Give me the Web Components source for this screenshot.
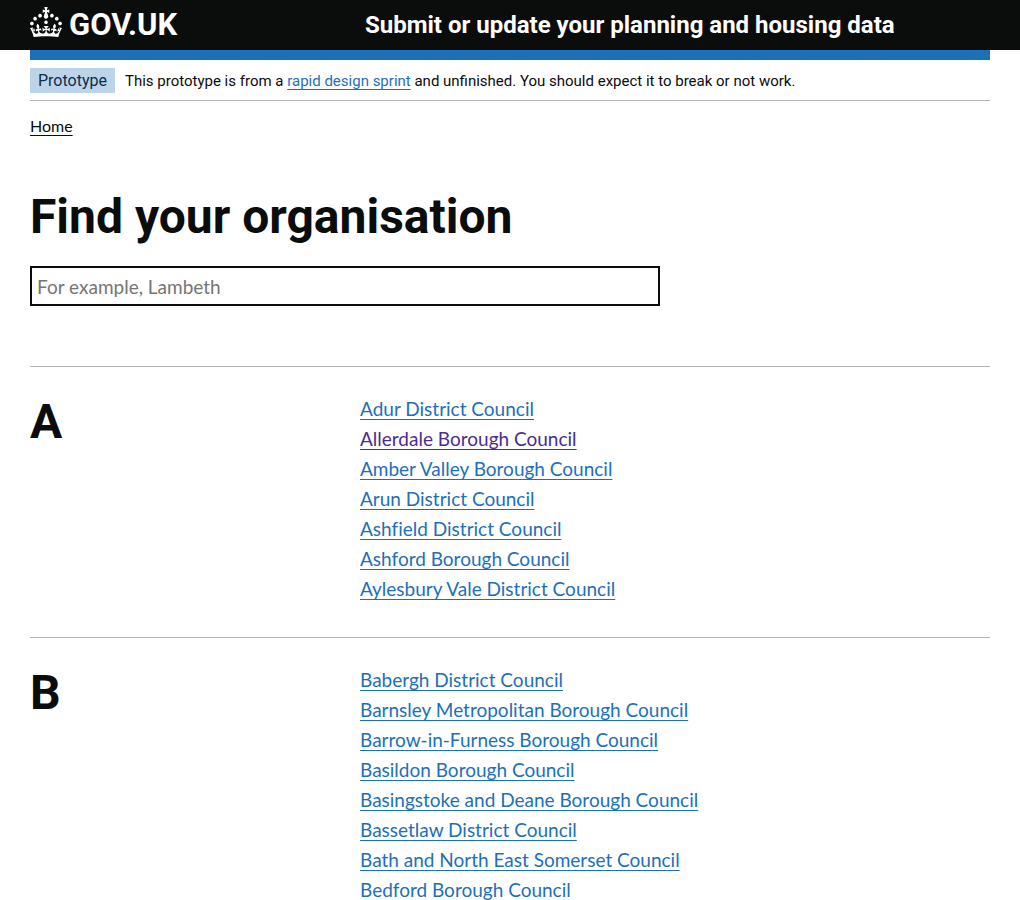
<!DOCTYPE html>
<html lang="en">
<head>
<meta charset="utf-8">
<meta name="viewport" content="width=device-width, initial-scale=1">
<title>Find your organisation</title>
<style>
  body { margin: 0; background: #fff; color: #0b0c0c; font-family: Lato, Roboto, sans-serif; font-variant-ligatures: none; }
  main { display: block; padding: 0 30px; }
</style>
</head>
<body>
<site-header>Submit or update your planning and housing data</site-header>
<main>
  <phase-banner tag="Prototype">This prototype is from a <text-link>rapid design sprint</text-link> and unfinished. You should expect it to break or not work.</phase-banner>
  <bread-crumbs>Home</bread-crumbs>
  <organisation-search placeholder="For example, Lambeth">Find your organisation</organisation-search>
  <organisation-group letter="A">
    <text-link>Adur District Council</text-link>
    <text-link visited>Allerdale Borough Council</text-link>
    <text-link>Amber Valley Borough Council</text-link>
    <text-link>Arun District Council</text-link>
    <text-link>Ashfield District Council</text-link>
    <text-link>Ashford Borough Council</text-link>
    <text-link>Aylesbury Vale District Council</text-link>
  </organisation-group>
  <organisation-group letter="B">
    <text-link>Babergh District Council</text-link>
    <text-link>Barnsley Metropolitan Borough Council</text-link>
    <text-link>Barrow-in-Furness Borough Council</text-link>
    <text-link>Basildon Borough Council</text-link>
    <text-link>Basingstoke and Deane Borough Council</text-link>
    <text-link>Bassetlaw District Council</text-link>
    <text-link>Bath and North East Somerset Council</text-link>
    <text-link>Bedford Borough Council</text-link>
  </organisation-group>
</main>

<script>
class BaseElement extends HTMLElement {
  connectedCallback() {
    if (this.shadowRoot) return;
    this.attachShadow({ mode: 'open' }).innerHTML = this.render();
  }
}

customElements.define('site-header', class extends BaseElement {
  render() {
    return `
      <style>
        :host { display: block; background: #0b0c0c; color: #fff; font-family: Roboto, sans-serif; }
        header { padding: 0 30px; }
        .row { display: grid; grid-template-columns: 1fr 2fr; align-items: center; }
        .logo { display: flex; align-items: center; gap: 7px; color: #fff; text-decoration: none; font-size: 31px; line-height: 50px; font-weight: 700; }
        svg { display: block; fill: currentColor; margin-bottom: 6px; }
        .service { padding-left: 15px; font-size: 24px; line-height: 50px; font-weight: 700; color: #fff; text-decoration: none; }
        .bar { height: 10px; background: #1d70b8; margin: 0 30px; }
        .below { background: #fff; }
      </style>
      <header>
        <div class="row">
          <a class="logo" href="#">
            <svg width="32" height="30" viewBox="0 0 32 30" aria-hidden="true"><path d="M22.6 10.4c-1 .4-2-.1-2.4-1-.4-.9.1-2 1-2.4.9-.4 2 .1 2.4 1s-.1 2-1 2.4m-5.9 6.7c-.9.4-2-.1-2.4-1-.4-.9.1-2 1-2.4.9-.4 2 .1 2.4 1s-.1 2-1 2.4m10.8-3.7c-1 .4-2-.1-2.4-1-.4-.9.1-2 1-2.4.9-.4 2 .1 2.4 1s0 2-1 2.4m3.3 4.8c-1 .4-2-.1-2.4-1-.4-.9.1-2 1-2.4.9-.4 2 .1 2.4 1s-.1 2-1 2.4M17 4.7l2.3 1.2V2.5l-2.3.7-.2-.2.9-3h-3.4l.9 3-.2.2c-.1.1-2.3-.7-2.3-.7v3.4L15 4.7c.1.1.1.2.2.2l-1.3 4c-.1.2-.1.4-.1.6 0 1.1.8 2 1.9 2.2h.7c1-.2 1.9-1.1 1.9-2.1 0-.2 0-.4-.1-.6l-1.3-4c-.1-.2 0-.2.1-.3m-7.6 5.7c.9.4 2-.1 2.4-1 .4-.9-.1-2-1-2.4-.9-.4-2 .1-2.4 1s0 2 1 2.4m-5 3c.9.4 2-.1 2.4-1 .4-.9-.1-2-1-2.4-.9-.4-2 .1-2.4 1s.1 2 1 2.4m-3.2 4.8c.9.4 2-.1 2.4-1 .4-.9-.1-2-1-2.4-.9-.4-2 .1-2.4 1s0 2 1 2.4m14.8 11c4.4 0 8.6.3 12.3.8 1.1-4.5 2.4-7 3.7-8.8l-2.5-.9c.2 1.3.3 1.9 0 2.7-.4-.4-.8-1.1-1.1-2.3l-1.2 4c.7-.5 1.3-.8 2-.9-1.1 2.5-2.6 3.1-3.5 3-1.1-.2-1.7-1.2-1.5-2.1.3-1.2 1.5-1.5 2.1-.1 1.1-2.3-.8-3-2-2.3 1.9-1.9 2.1-3.5.6-5.6-2.1 1.6-2.1 3.2-1.2 5.5-1.2-1.4-3.2-.6-2.5 1.6.9-1.4 2.1-.5 1.9.8-.2 1.1-1.7 2.1-3.5 1.9-2.7-.2-2.9-2.1-2.9-3.6.7-.1 1.9.5 2.9 1.9l.4-4.3c-1.1 1.1-2.1 1.4-3.2 1.4.4-1.2 2.1-3 2.1-3h-5.4s1.7 1.9 2.1 3c-1.1 0-2.1-.2-3.2-1.4l.4 4.3c1-1.4 2.2-2 2.9-1.9-.1 1.5-.2 3.4-2.9 3.6-1.9.2-3.4-.8-3.5-1.9-.2-1.3 1-2.2 1.9-.8.7-2.3-1.2-3-2.5-1.6.9-2.2.9-3.9-1.2-5.5-1.5 2-1.3 3.7.6 5.6-1.2-.7-3.1 0-2 2.3.6-1.4 1.8-1.1 2.1.1.2.9-.3 1.9-1.5 2.1-.9.2-2.4-.5-3.5-3 .6 0 1.2.3 2 .9l-1.2-4c-.3 1.1-.7 1.9-1.1 2.3-.3-.8-.2-1.4 0-2.7l-2.9.9C1.3 23 2.6 25.5 3.7 30c3.7-.5 7.9-.8 12.3-.8"/></svg>
            <span>GOV.UK</span>
          </a>
          <a class="service" href="#"><slot></slot></a>
        </div>
      </header>
      <div class="below"><div class="bar"></div></div>`;
  }
});

customElements.define('phase-banner', class extends BaseElement {
  render() {
    return `
      <style>
        :host { display: block; border-bottom: 1px solid #b1b4b6; padding: 8px 0 6px; }
        p { display: flex; align-items: baseline; gap: 10px; margin: 0; font: 400 15px/25px Roboto, sans-serif; }
        strong { padding: 0 8px; background: #bbd4ea; color: #0c2d4a; font: 400 16px/25px Roboto, sans-serif; }
      </style>
      <p><strong>${this.getAttribute('tag')}</strong><span><slot></slot></span></p>`;
  }
});

customElements.define('text-link', class extends BaseElement {
  render() {
    const colour = this.hasAttribute('visited') ? '#4c2c92' : '#1d70b8';
    return `
      <style>
        :host { display: inline; }
        a { color: ${colour}; text-decoration: underline; text-decoration-thickness: 1px; text-underline-offset: 3px; }
      </style>
      <a href="#"><slot></slot></a>`;
  }
});

customElements.define('bread-crumbs', class extends BaseElement {
  render() {
    return `
      <style>
        :host { display: block; padding-top: 15px; font-size: 16px; line-height: 20px; }
        a { color: #0b0c0c; text-decoration: underline; text-decoration-thickness: 1px; text-underline-offset: 3px; }
      </style>
      <nav aria-label="Breadcrumb"><a href="#"><slot></slot></a></nav>`;
  }
});

customElements.define('organisation-search', class extends BaseElement {
  render() {
    return `
      <style>
        :host { display: block; padding: 55px 0 60px; }
        h1 { margin: 0 0 23px; font: 700 48px/52px Roboto, sans-serif; }
        .field { width: calc((100% + 30px) * 2 / 3 - 30px); }
        input { display: block; box-sizing: border-box; width: 100%; height: 40px; margin: 0; padding: 5px; border: 2px solid #0b0c0c; border-radius: 0; background: #fff; color: #0b0c0c; font: 400 19px/25px Lato, sans-serif; }
        input::placeholder { color: #757575; opacity: 1; }
      </style>
      <h1><label for="query"><slot></slot></label></h1>
      <div class="field"><input id="query" type="text" placeholder="${this.getAttribute('placeholder')}"></div>`;
  }
});

customElements.define('organisation-group', class extends BaseElement {
  render() {
    const items = [...this.children].map((link, i) => {
      link.slot = 'item-' + i;
      return `<li><slot name="item-${i}"></slot></li>`;
    }).join('');
    return `
      <style>
        :host { display: block; border-top: 1px solid #b1b4b6; padding: 29px 0 31px; }
        section { display: grid; grid-template-columns: 1fr 2fr; margin: 0 -15px; }
        h2, ul { margin: 0; padding: 0 15px; }
        h2 { font: 700 48px/52px Roboto, sans-serif; }
        ul { list-style: none; font-size: 19px; line-height: 25px; }
        li { margin-bottom: 5px; }
      </style>
      <section><h2>${this.getAttribute('letter')}</h2><ul>${items}</ul></section>`;
  }
});
</script>
</body>
</html>
